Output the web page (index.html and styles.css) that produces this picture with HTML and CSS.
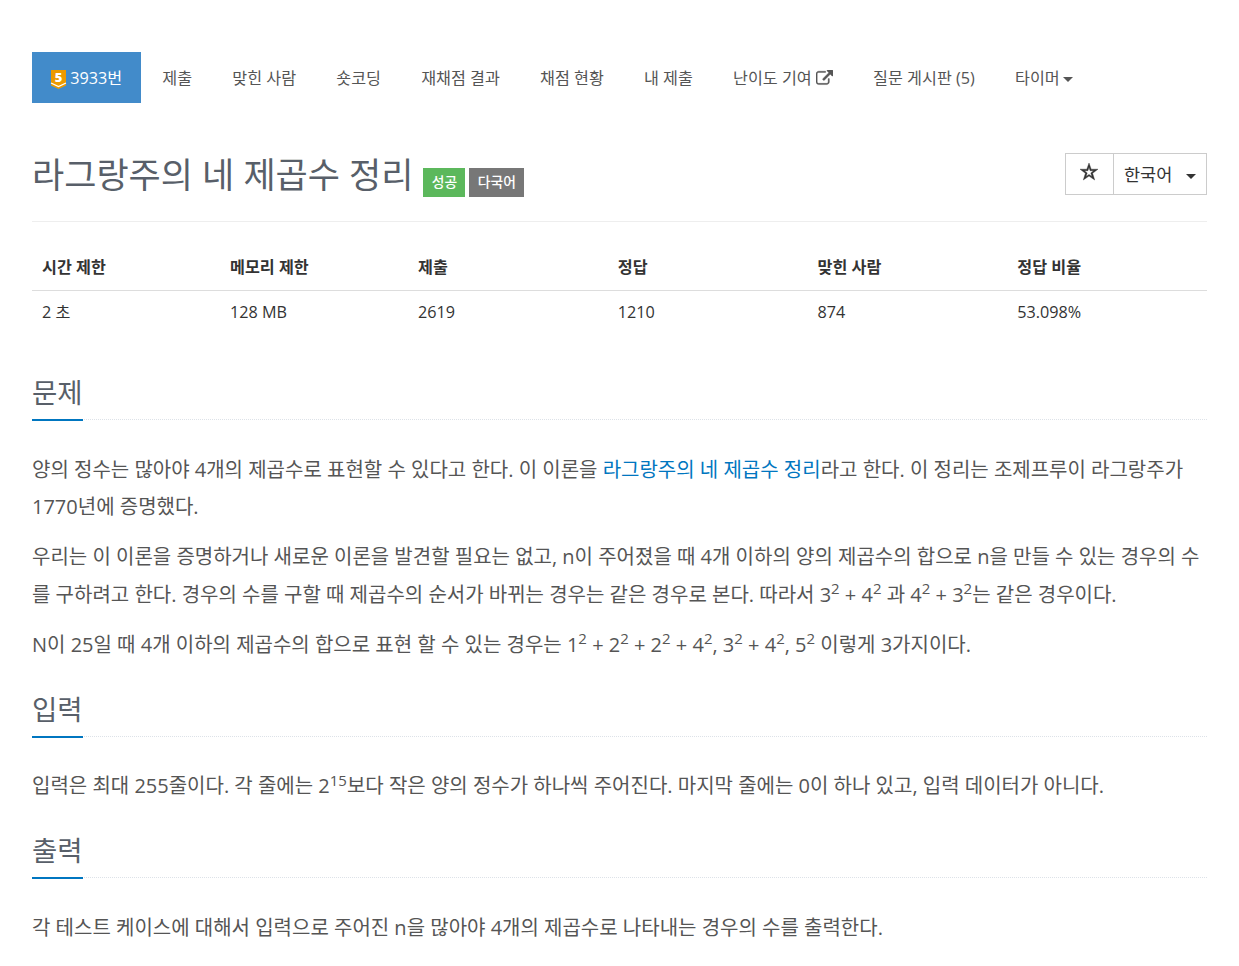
FILE: index.html
```html
<!DOCTYPE html>
<html lang="ko">
<head>
  <meta charset="UTF-8">
  <meta name="viewport" content="width=device-width, initial-scale=1.0">
  <title>3933번: 라그랑주의 네 제곱수 정리</title>
  <link rel="stylesheet" href="styles.css">
</head>
<body>
  <div class="container">
    <ul class="problem-menu">
      <li class="active"><a href="#"><svg class="tier" viewBox="0 0 15 19"><path fill="#ec9a00" d="M0 0h15v15.500L7.500 19 0 15.500z"/><path d="M0 13l7.500 3.500L15 13" fill="none" stroke="#fff" stroke-width="1.300"/><text x="7.500" y="12">5</text></svg> 3933번</a></li>
      <li><a href="#">제출</a></li>
      <li><a href="#">맞힌 사람</a></li>
      <li><a href="#">숏코딩</a></li>
      <li><a href="#">재채점 결과</a></li>
      <li><a href="#">채점 현황</a></li>
      <li><a href="#">내 제출</a></li>
      <li><a href="#">난이도 기여 <svg class="external" viewBox="0 0 1792 1792"><path d="M1408 928v320q0 119-84.500 203.500t-203.500 84.500h-832q-119 0-203.500-84.500t-84.500-203.500v-832q0-119 84.500-203.500t203.500-84.500h704q14 0 23 9t9 23v64q0 14-9 23t-23 9h-704q-66 0-113 47t-47 113v832q0 66 47 113t113 47h832q66 0 113-47t47-113v-320q0-14 9-23t23-9h64q14 0 23 9t9 23zm384-864v512q0 26-19 45t-45 19-45-19l-176-176-652 652q-10 10-23 10t-23-10l-114-114q-10-10-10-23t10-23l652-652-176-176q-19-19-19-45t19-45 45-19h512q26 0 45 19t19 45z"/></svg></a></li>
      <li><a href="#">질문 게시판 (5)</a></li>
      <li><a href="#">타이머<span class="caret"></span></a></li>
    </ul>

    <div class="page-header">
      <h1>라그랑주의 네 제곱수 정리</h1>
      <span class="label label-success">성공</span>
      <span class="label label-default">다국어</span>
      <div class="btn-group">
        <button class="btn btn-star"><svg class="star" viewBox="0 0 18 18"><path fill-rule="evenodd" d="M9 0l2.200 6.200H18l-5.400 4.100 2.100 6.700L9 13.100 3.300 17l2.100-6.700L0 6.200h6.800zM9 4.300L7.900 7.700H4.400l2.800 2.200-1.100 3.500L9 11.400l2.900 2-1.100-3.500 2.800-2.200h-3.500z"/></svg></button>
        <button class="btn btn-lang">한국어<span class="caret"></span></button>
      </div>
    </div>

    <table class="info">
      <thead>
        <tr><th class="c16">시간 제한</th><th class="c16">메모리 제한</th><th>제출</th><th>정답</th><th>맞힌 사람</th><th>정답 비율</th></tr>
      </thead>
      <tbody>
        <tr><td>2 초</td><td>128 MB</td><td>2619</td><td>1210</td><td>874</td><td>53.098%</td></tr>
      </tbody>
    </table>

    <section>
      <div class="headline"><h2>문제</h2></div>
      <p>양의 정수는 많아야 4개의 제곱수로 표현할 수 있다고 한다. 이 이론을 <a href="#">라그랑주의 네 제곱수 정리</a>라고 한다. 이 정리는 조제프루이 라그랑주가 1770년에 증명했다.</p>
      <p>우리는 이 이론을 증명하거나 새로운 이론을 발견할 필요는 없고, n이 주어졌을 때 4개 이하의 양의 제곱수의 합으로 n을 만들 수 있는 경우의 수를 구하려고 한다. 경우의 수를 구할 때 제곱수의 순서가 바뀌는 경우는 같은 경우로 본다. 따라서 3<sup>2</sup> + 4<sup>2</sup> 과 4<sup>2</sup> + 3<sup>2</sup>는 같은 경우이다.</p>
      <p>N이 25일 때 4개 이하의 제곱수의 합으로 표현 할 수 있는 경우는 1<sup>2</sup> + 2<sup>2</sup> + 2<sup>2</sup> + 4<sup>2</sup>, 3<sup>2</sup> + 4<sup>2</sup>, 5<sup>2</sup> 이렇게 3가지이다.</p>
    </section>

    <section>
      <div class="headline"><h2>입력</h2></div>
      <p>입력은 최대 255줄이다. 각 줄에는 2<sup>15</sup>보다 작은 양의 정수가 하나씩 주어진다. 마지막 줄에는 0이 하나 있고, 입력 데이터가 아니다.</p>
    </section>

    <section>
      <div class="headline"><h2>출력</h2></div>
      <p>각 테스트 케이스에 대해서 입력으로 주어진 n을 많아야 4개의 제곱수로 나타내는 경우의 수를 출력한다.</p>
    </section>
  </div>
</body>
</html>
```
FILE: styles.css
```css
* { box-sizing: border-box; }
body {
  margin: 0;
  background: #fff;
  color: #333;
  font-family: "Open Sans", "Noto Sans CJK KR", sans-serif;
  font-size: 16px;
  line-height: 1.6;
}
a { color: #0076c0; text-decoration: none; }
.container { padding: 52px 32px 0; }

.problem-menu {
  display: flex;
  gap: 2.200px;
  margin: 0;
  padding: 0;
  list-style: none;
  font-size: 16.200px;
}
.problem-menu a {
  display: block;
  height: 51px;
  padding: 0 19px;
  line-height: 53px;
  color: #555;
  white-space: nowrap;
}
.problem-menu .active a { background: #428bca; color: #fff; }
.tier { width: 15px; height: 19px; vertical-align: -5px; overflow: visible; }
.tier text {
  fill: #fff;
  font-size: 13px;
  font-weight: 800;
  text-anchor: middle;
}
.external {
  width: 17px;
  height: 17px;
  vertical-align: -3px;
  fill: #555;
  stroke: #555;
  stroke-width: 40;
}
.caret {
  display: inline-block;
  margin-left: 3px;
  vertical-align: middle;
  border-top: 5px solid;
  border-right: 5px solid transparent;
  border-left: 5px solid transparent;
}

.page-header {
  display: flex;
  height: 119px;
  padding-top: 50px;
  border-bottom: 1px solid #eee;
}
h1 {
  margin: 0 10px 0 0;
  color: #585f69;
  font-size: 35px;
  font-weight: 400;
  line-height: 44px;
}
.label {
  height: 29px;
  margin: 15px 4px 0 0;
  padding: 0 8.300px;
  color: #fff;
  font-size: 13.800px;
  font-weight: 500;
  line-height: 28px;
}
.label-success { background: #5cb85c; }
.label-default { background: #777; }
.btn-group { display: flex; margin-left: auto; }
.btn {
  height: 42px;
  padding: 0 10px;
  border: 1px solid #ccc;
  background: #fff;
  color: #333;
  font: inherit;
  font-size: 17.500px;
}
.btn-star { width: 49px; padding: 0 15px 4px; }
.btn-lang { width: 94px; margin-left: -1px; white-space: nowrap; }
.btn-lang .caret { margin-left: 14px; }
.star {
  display: block;
  width: 18px;
  height: 18px;
  margin-left: -1px;
  fill: #333;
  stroke: #333;
  stroke-width: 0.4;
}

.info {
  width: 100%;
  margin: 24px 0 37px;
  border-collapse: collapse;
  table-layout: fixed;
  font-size: 16.200px;
}
.info th, .info td { height: 44px; padding: 1px 10px 0; text-align: left; }
.info th { border-bottom: 1px solid #ddd; font-weight: 700; }
.info .c16 { width: 16%; }

.headline { margin: 24.500px 0 30.500px; border-bottom: 1px dotted #dde2e8; }
h2 {
  display: inline-block;
  height: 50px;
  margin: 0 0 -2px;
  border-bottom: 2px solid #0076c0;
  color: #585f69;
  font-size: 27.500px;
  font-weight: 400;
  line-height: 43px;
  vertical-align: top;
}
section p { margin: 0 0 12.500px; color: #555; font-size: 20px; line-height: 37.500px; }
sup { position: relative; top: -0.5em; font-size: 75%; line-height: 0; vertical-align: baseline; }
```
